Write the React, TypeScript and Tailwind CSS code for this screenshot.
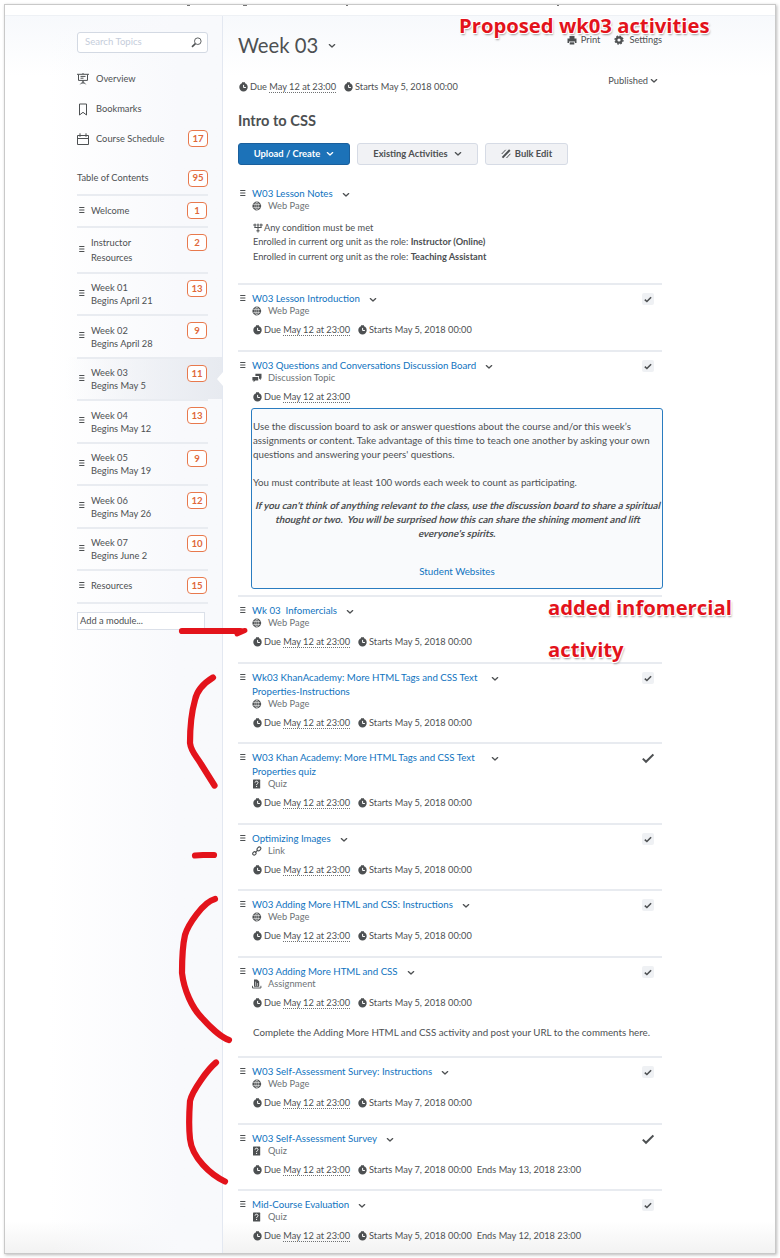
import React from "react";

const GRAY = "#4d5052";

function Grip({ className = "" }: { className?: string }) {
  return (
    <svg className={"shrink-0 " + className} width="6" height="8" viewBox="0 0 6 8" stroke={GRAY} strokeWidth="1">
      <path d="M0.2 1.5H5.4M0.2 4H5.4M0.2 6.5H5.4" />
    </svg>
  );
}

function Chevron({ className = "", color = GRAY }: { className?: string; color?: string }) {
  return (
    <svg className={"shrink-0 " + className} width="8" height="6" viewBox="0 0 8 6" fill="none" stroke={color} strokeWidth="1.3" strokeLinecap="round" strokeLinejoin="round">
      <path d="M1.3 1.6L4 4.1L6.7 1.6" />
    </svg>
  );
}

function Clock() {
  return (
    <svg className="shrink-0" width="9" height="10" viewBox="0 0 9 10">
      <path d="M3 0.3H6V1.3C7.7 1.9 8.7 3.4 8.7 5.2A4.2 4.2 0 1 1 0.3 5.2C0.3 3.4 1.4 1.9 3 1.3Z" fill={GRAY} />
      <path d="M4.6 2.9V5.5H6.9" fill="none" stroke="#fff" strokeWidth="1" />
    </svg>
  );
}

type Kind = "Web Page" | "Discussion Topic" | "Quiz" | "Link" | "Assignment";

function KindIcon({ kind }: { kind: Kind }) {
  if (kind === "Web Page")
    return (
      <svg width="10" height="10" viewBox="0 0 10 10">
        <circle cx="4.8" cy="5" r="4.4" fill={GRAY} />
        <g fill="none" stroke="#fff" strokeWidth="0.5">
          <ellipse cx="4.8" cy="5" rx="2" ry="3.7" />
          <path d="M4.8 1.3V8.700M1.2 3.5H8.400M1.2 6.5H8.400" />
        </g>
      </svg>
    );
  if (kind === "Discussion Topic")
    return (
      <svg width="10" height="10" viewBox="0 0 10 10" fill={GRAY}>
        <path d="M3.4 0.8H9.5V5.4H8.8V7.1L7 5.4V3.1H3.4Z" />
        <path d="M0.4 3.9H6.2V7.5H3.3L1.6 9.3V7.5H0.4Z" />
      </svg>
    );
  if (kind === "Quiz")
    return (
      <svg width="10" height="10" viewBox="0 0 10 10">
        <rect x="1" y="0.6" width="7.2" height="8.9" rx="0.6" fill={GRAY} />
        <path d="M3.1 3.6C3.1 1.7 6.1 1.8 6 3.6C6 4.7 4.6 4.6 4.6 6" fill="none" stroke="#fff" strokeWidth="1" />
        <rect x="4.1" y="6.9" width="1" height="1.1" fill="#fff" />
      </svg>
    );
  if (kind === "Link")
    return (
      <svg width="10" height="10" viewBox="0 0 10 10" fill="none" stroke={GRAY} strokeWidth="1.1" strokeLinecap="round">
        <ellipse cx="6.9" cy="2.9" rx="2.2" ry="1.6" transform="rotate(-45 6.9 2.9)" />
        <ellipse cx="2.4" cy="7.4" rx="1.8" ry="1.5" transform="rotate(-45 2.4 7.4)" />
        <path d="M3.500 6.3L5.7 4.1" />
      </svg>
    );
  return (
    <svg width="10" height="10" viewBox="0 0 10 10" fill={GRAY}>
      <path d="M2 0.5H5.1L7.2 2.6V7.8H2Z" />
      <path d="M3.6 2.6V7M5.4 4V7" stroke="#fff" strokeWidth="0.6" />
      <path d="M0.5 6.8V9H8.9V6.8" fill="none" stroke={GRAY} strokeWidth="0.9" />
    </svg>
  );
}

function Dates({ start, end }: { start?: string; end?: string }) {
  return (
    <div className="flex h-3 items-center text-[9.22px] leading-3">
      <Clock />
      <span className="ml-[2px]">
        Due <span className="border-b border-dotted border-[#6e7173]">May 12 at 23:00</span>
      </span>
      {start && (
        <span className="ml-2 flex items-center">
          <Clock />
          <span className="ml-[2px]">Starts {start}</span>
        </span>
      )}
      {end && <span className="ml-[5px]">Ends {end}</span>}
    </div>
  );
}

type Item = {
  title: React.ReactNode;
  kind: Kind;
  height: string;
  start?: string;
  end?: string;
  noDates?: boolean;
  twoLine?: boolean;
  mark?: "box" | "plain";
  body?: React.ReactNode;
  first?: boolean;
};

function Activity({ title, kind, height, start, end, noDates, twoLine, mark, body, first }: Item) {
  return (
    <section className={"flex w-[424px] shrink-0 items-start border-t-2 pt-[7px] " + height + (first ? " border-transparent" : " border-[#e8ebf0]")}>
      <Grip className="mt-[2px] ml-[2px]" />
      <div className="ml-[6px] w-0 grow">
        <div className="flex h-[13px] items-start data-[tall=true]:h-[27px]" data-tall={twoLine}>
          <h3 className={"-mt-[1px] whitespace-nowrap text-[9.7px] leading-[14px] text-[#0f73c0] " + (twoLine ? "w-[230px]" : "")}>{title}</h3>
          <Chevron className="mt-[5px] ml-[9px]" />
        </div>
        <div className="flex h-[11px] items-center leading-[11px] text-[#6e7376]">
          <KindIcon kind={kind} />
          <span className="ml-[6px]">{kind}</span>
        </div>
        {!noDates && (
          <div className="mt-2 ml-[1px]">
            <Dates start={start} end={end} />
          </div>
        )}
        {body}
      </div>
      {mark === "box" && (
        <span className="-ml-[20px] mt-[1px] mr-[8px] flex h-3 w-3 items-center justify-center rounded-[2px] bg-[#eff1f4]">
          <svg width="8" height="7" viewBox="0 0 8 7" fill="none" stroke={GRAY} strokeWidth="1.6">
            <path d="M0.8 3.6L2.9 5.5L7.1 1.2" />
          </svg>
        </span>
      )}
      {mark === "plain" && (
        <svg className="-ml-[20px] mt-[2px] mr-[8px]" width="12" height="11" viewBox="0 0 12 11" fill="none" stroke={GRAY} strokeWidth="2">
          <path d="M0.8 5.6L4 8.800L11.4 1.4" />
        </svg>
      )}
    </section>
  );
}

function Slanted({ children }: { children: React.ReactNode }) {
  return (
    <div className="flex h-[14px] justify-center">
      <span className="-skew-x-[14deg]">{children}</span>
    </div>
  );
}

const items: Item[] = [
  {
    title: "W03 Lesson Notes",
    kind: "Web Page",
    height: "h-[105px]",
    noDates: true,
    first: true,
    body: (
      <div className="mt-[10px] ml-[1px] text-[9.24px] leading-[14.4px]">
        <div className="flex items-center">
          <svg width="10" height="11" viewBox="0 0 10 11" fill="none" stroke={GRAY} strokeWidth="1">
            <path d="M0.2 2H3.6M4.2 2H5.8M6.4 2H9.8M2 0.6V4.5M8 0.6V4.5M5 0.6V9.5M1.4 4.5H8.6" />
            <path d="M3.4 7.8H6.6" />
          </svg>
          <span className="ml-[1px]">Any condition must be met</span>
        </div>
        <div>Enrolled in current org unit as the role: <b>Instructor (Online)</b></div>
        <div>Enrolled in current org unit as the role: <b>Teaching Assistant</b></div>
      </div>
    ),
  },
  { title: "W03 Lesson Introduction", kind: "Web Page", height: "h-[67px]", start: "May 5, 2018 00:00", mark: "box" },
  {
    title: "W03 Questions and Conversations Discussion Board",
    kind: "Discussion Topic",
    height: "h-[245px]",
    mark: "box",
    body: (
      <div className="-ml-[1px] mt-[5px] h-[181px] w-[412px] rounded-[3px] border border-[#2a7cc0] bg-[#f9fafc] pt-[10px] whitespace-nowrap text-[9.75px] leading-[14px]">
        <p className="pl-[1px]">
          Use the discussion board to ask or answer questions about the course and/or this week’s
          <br />
          assignments or content. Take advantage of this time to teach one another by asking your own
          <br />
          questions and answering your peers' questions.
        </p>
        <p className="mt-[14px] pl-[1px]">You must contribute at least 100 words each week to count as participating.</p>
        <div className="mt-[9px] pl-[2px] font-bold">
          <Slanted>If you can't think of anything relevant to the class, use the discussion board to share a spiritual</Slanted>
          <Slanted>thought or two.&nbsp; You will be surprised how this can share the shining moment and lift</Slanted>
          <Slanted>everyone's spirits.</Slanted>
        </div>
        <p className="mt-6 text-center text-[#0f73c0]">Student Websites</p>
      </div>
    ),
  },
  { title: <>Wk 03&nbsp; Infomercials</>, kind: "Web Page", height: "h-[67px]", start: "May 5, 2018 00:00" },
  {
    title: (
      <>
        Wk03 KhanAcademy: More HTML Tags and CSS Text
        <br />
        Properties-Instructions
      </>
    ),
    kind: "Web Page",
    height: "h-[80px]",
    start: "May 5, 2018 00:00",
    twoLine: true,
    mark: "box",
  },
  {
    title: (
      <>
        W03 Khan Academy: More HTML Tags and CSS Text
        <br />
        Properties quiz
      </>
    ),
    kind: "Quiz",
    height: "h-[81px]",
    start: "May 5, 2018 00:00",
    twoLine: true,
    mark: "plain",
  },
  { title: "Optimizing Images", kind: "Link", height: "h-[66px]", start: "May 5, 2018 00:00", mark: "box" },
  { title: "W03 Adding More HTML and CSS: Instructions", kind: "Web Page", height: "h-[67px]", start: "May 5, 2018 00:00", mark: "box" },
  {
    title: "W03 Adding More HTML and CSS",
    kind: "Assignment",
    height: "h-[100px]",
    start: "May 5, 2018 00:00",
    mark: "box",
    body: <p className="mt-[16px] ml-[1px] whitespace-nowrap text-[9.75px] leading-[14px]">Complete the Adding More HTML and CSS activity and post your URL to the comments here.</p>,
  },
  { title: "W03 Self-Assessment Survey: Instructions", kind: "Web Page", height: "h-[67px]", start: "May 7, 2018 00:00", mark: "box" },
  { title: "W03 Self-Assessment Survey", kind: "Quiz", height: "h-[66px]", start: "May 7, 2018 00:00", end: "May 13, 2018 23:00", mark: "plain" },
  { title: "Mid-Course Evaluation", kind: "Quiz", height: "h-[63px]", start: "May 5, 2018 00:00", end: "May 12, 2018 23:00", mark: "box" },
];

function Badge({ n, className = "" }: { n: number; className?: string }) {
  return (
    <span className={"flex h-[17px] w-5 shrink-0 items-center justify-center rounded-[4px] border border-[#e8794d] bg-white text-[9.6px] leading-none font-bold text-[#e0683a] " + className}>{n}</span>
  );
}

const modules: { lines: string[]; n: number; height: string; active?: boolean; loose?: boolean }[] = [
  { lines: ["Welcome"], n: 1, height: "h-[32px]" },
  { lines: ["Instructor", "Resources"], n: 2, height: "h-[46px]", loose: true },
  { lines: ["Week 01", "Begins April 21"], n: 13, height: "h-[42px]" },
  { lines: ["Week 02", "Begins April 28"], n: 9, height: "h-[43px]" },
  { lines: ["Week 03", "Begins May 5"], n: 11, height: "h-[42px]", active: true },
  { lines: ["Week 04", "Begins May 12"], n: 13, height: "h-[43px]" },
  { lines: ["Week 05", "Begins May 19"], n: 9, height: "h-[42px]" },
  { lines: ["Week 06", "Begins May 26"], n: 12, height: "h-[43px]" },
  { lines: ["Week 07", "Begins June 2"], n: 10, height: "h-[42px]" },
  { lines: ["Resources"], n: 15, height: "h-[33px]" },
];

function Sidebar() {
  return (
    <aside className="flex w-[218px] shrink-0 flex-col border-r border-[#e3e8f1] bg-linear-to-r from-transparent from-20% to-[#f8f9fc] to-80% pl-[72px]">
      <div className="mt-4 flex h-[21px] w-[131px] items-center justify-between rounded-[3px] border border-[#d3d9e3] bg-white pr-[5px] pl-[7px]">
        <span className="text-[9.6px] text-[#c5cddb]">Search Topics</span>
        <svg width="11" height="11" viewBox="0 0 11 11" fill="none" stroke={GRAY} strokeWidth="0.9">
          <circle cx="6.8" cy="4.2" r="3.3" />
          <path d="M4.4 6.7L1 9.9" strokeWidth="1.6" />
        </svg>
      </div>
      <div className="mt-[11px] flex h-[30px] items-center">
        <svg width="12" height="12" viewBox="0 0 12 12" fill="none" stroke={GRAY} strokeWidth="1">
          <path d="M0 1.3H12M1.5 1.5V7.4H10.5V1.5M6 0V1M6 7.5V11M6 8.6L3.4 11.3M6 8.6L8.6 11.3M3.5 3.4H8.5M3.5 5.2H6.5" />
        </svg>
        <span className="ml-[7px]">Overview</span>
      </div>
      <div className="flex h-[30px] items-center">
        <svg width="12" height="13" viewBox="0 0 12 13" fill="none" stroke={GRAY} strokeWidth="1">
          <path d="M2.5 1H9.500V12L6 9.3L2.5 12Z" />
        </svg>
        <span className="ml-[7px]">Bookmarks</span>
      </div>
      <div className="-mt-[1px] flex h-[31px] w-[131px] items-center">
        <svg width="12" height="12" viewBox="0 0 12 12" fill="none" stroke={GRAY} strokeWidth="1">
          <path d="M0.5 2.5H11.5V11.5H0.5ZM0.5 5.5H11.5M3 0.3V3.8M9 0.3V3.8" />
        </svg>
        <span className="ml-[7px] grow">Course Schedule</span>
        <Badge n={17} />
      </div>
      <div className="mt-2 flex h-[32px] w-[131px] items-center">
        <span className="grow">Table of Contents</span>
        <Badge n={95} />
      </div>
      {modules.map((m, i) => (
        <div key={i} className={"relative flex shrink-0 " + m.height}>
          {m.active && <div className="absolute inset-y-0 right-0 -left-[12px] bg-linear-to-r from-transparent to-[#e7eaf0]" />}
          {m.active && <div className="absolute top-[15px] right-[-1px] border-y-[7px] border-r-[6px] border-y-transparent border-r-white" />}
          <div className="relative flex w-[131px] border-t-2 border-[#e9ecf1]">
            <Grip className="mb-[3px] ml-[2px] self-center" />
            <div className={"ml-[6px] grow self-center " + (m.lines.length === 1 ? "pb-[2px] leading-[13px]" : m.loose ? "pb-[1px] leading-[15px]" : "leading-[13px]")}>
              {m.lines.map((l) => (
                <div key={l}>{l}</div>
              ))}
            </div>
            <Badge n={m.n} className="mt-[6px] mr-[1px]" />
          </div>
        </div>
      ))}
      <div className="h-[2px] w-[131px] shrink-0 bg-[#e9ecf1]" />
      <div className="mt-2 flex h-[18px] w-[128px] shrink-0 items-center border border-[#dbe0e9] bg-white pl-[2px]">Add a module...</div>
    </aside>
  );
}

function Marks() {
  return (
    <svg className="pointer-events-none absolute inset-0" width="780" height="1258" viewBox="0 0 780 1258" fill="none" stroke="#e3131b" strokeWidth="6.2" strokeLinecap="round" strokeLinejoin="round">
      <path d="M182 631H240" />
      <path d="M236 632L245 630.5L237 634" strokeWidth="5" />
      <path d="M213 677.500C204 683 197 690 195 700C191 714 190 728 190 743C191 752 197 757 201 764L214.500 785.500" />
      <path d="M195 855.500L203 855H214" />
      <path d="M215 899C203 902 188 925 185 935C182 948 182 965 182 973C184 990 192 1008 202 1018C210 1027 222 1038 229 1040" />
      <path d="M216 1062.500C208 1069 192 1091 190 1101C189 1115 189 1130 190 1139C192 1158 211 1175 225 1181.500" />
    </svg>
  );
}

const noteStyle =
  "absolute whitespace-nowrap font-['Open_Sans','Noto_Sans',sans-serif] font-bold text-[20.25px] leading-[42px] text-[#e3131b] [text-shadow:1px_1px_0_#fff,-1px_-1px_0_#fff,1px_-1px_0_#fff,-1px_1px_0_#fff,1px_2px_2px_#999]";

export default function App() {
  return (
    <div className="relative h-[1258px] w-[780px] overflow-hidden bg-white p-1 font-['Lato',sans-serif] text-[9.3px] text-[#4d5052]">
      <div className="flex h-[1250px] w-[772px] flex-col overflow-hidden border border-[#c9c9c9] bg-white shadow-[1px_1px_3px_#bbb]">
        <div className="h-[10px] shrink-0">
          <svg className="block" width="770" height="2" viewBox="0 0 770 2" fill="#777">
            <path d="M182 0H185V1H182ZM238 0H242V1H238ZM341 0H343V1H341ZM552 0H554V1H552Z" />
          </svg>
        </div>
        <div className="flex grow border-t border-[#eef1f5] bg-[linear-gradient(to_bottom,#f7f9fc_0,#ffffff_60px,#ffffff_1205px,#f2f2f2_1238px)]">
          <Sidebar />
          <main className="flex w-[440px] shrink-0 flex-col pl-[15px]">
            <div className="flex h-[60px] w-[424px] items-start">
              <h1 className="mt-[16px] text-[20.3px] leading-[26px]">Week 03</h1>
              <Chevron className="mt-[27px] ml-[10px]" />
              <div className="mt-[18px] ml-auto flex h-[12px] items-center">
                <svg width="10" height="9" viewBox="0 0 10 9" fill={GRAY}>
                  <path d="M2.500 0H7.500V2.500H9.500V7H8V5.500H2V7H0.500V2.500H2.500Z" />
                  <path d="M2.700 6.300H7.300V8.500H2.700Z" />
                </svg>
                <span className="ml-[4px]">Print</span>
                <svg className="ml-[14px]" width="10" height="10" viewBox="0 0 10 10" fill="none" stroke={GRAY}>
                  <circle cx="5" cy="5" r="2.700" strokeWidth="2.200" />
                  <circle cx="5" cy="5" r="4" strokeWidth="1.300" strokeDasharray="1.700 1.440" />
                </svg>
                <span className="ml-[5px]">Settings</span>
              </div>
            </div>
            <div className="flex h-[28px] w-[424px] items-start justify-between">
              <div className="mt-[5px] ml-[1px]">
                <Dates start="May 5, 2018 00:00" />
              </div>
              <div className="-mt-[1px] mr-[4px] flex items-center leading-[12px]">
                Published
                <Chevron className="ml-[2px]" />
              </div>
            </div>
            <h2 className="mt-[7px] text-[14.6px] leading-[20px] font-bold">Intro to CSS</h2>
            <div className="mt-[12px] flex h-[22px] items-stretch gap-[7px] text-[9.4px] font-bold">
              <div className="flex w-[112px] items-center justify-center rounded-[3px] border border-[#1a5f9c] bg-[#1c72b8] text-white">
                Upload / Create
                <Chevron className="ml-[6px]" color="#fff" />
              </div>
              <div className="flex w-[121px] items-center justify-center rounded-[3px] border border-[#d6dbe5] bg-[#f1f2f5]">
                Existing Activities
                <Chevron className="ml-[6px]" />
              </div>
              <div className="flex w-[83px] items-center justify-center rounded-[3px] border border-[#d6dbe5] bg-[#f1f2f5]">
                <svg className="mr-[4px]" width="10" height="10" viewBox="0 0 10 10" fill="none" stroke={GRAY} strokeWidth="1.900">
                  <path d="M1.500 8.600L8.800 1" />
                  <path d="M0.700 5L4.700 0.800M5.500 9L9.400 4.800" strokeWidth="1" />
                </svg>
                Bulk Edit
              </div>
            </div>
            <div className="mt-[13px] flex flex-col">
              {items.map((it, i) => (
                <Activity key={i} {...it} />
              ))}
            </div>
          </main>
        </div>
      </div>
      <Marks />
      <div className={noteStyle + " top-[4px] left-[459px]"}>Proposed wk03 activities</div>
      <div className={noteStyle + " top-[586px] left-[548px]"}>
        added infomercial
        <br />
        activity
      </div>
    </div>
  );
}
